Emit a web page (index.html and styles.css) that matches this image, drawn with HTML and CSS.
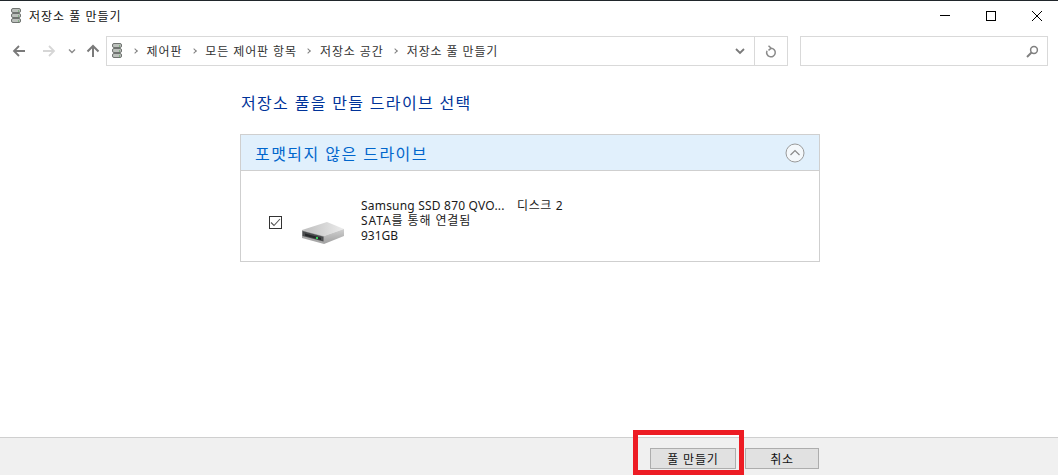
FILE: index.html
```html
<!DOCTYPE html>
<html lang="ko">
<head>
    <meta charset="UTF-8">
    <meta name="viewport" content="width=device-width, initial-scale=1.0">
    <title>저장소 풀 만들기</title>
    <link rel="stylesheet" href="styles.css">
</head>
<body>
    <div class="window">
        <div class="titlebar">
            <svg class="title-icon" width="16" height="18" viewBox="0 0 16 18">
                <g fill="#bcc0bc" stroke="#6f7370">
                    <rect x="3.500" y="1.500" width="9" height="4" rx="1.500"/>
                    <rect x="3.500" y="6.500" width="9" height="4" rx="1.500"/>
                    <rect x="3.500" y="11.500" width="9" height="4" rx="1.500"/>
                </g>
                <path d="M10 4h1M10 9h1M10 14h1" stroke="#4fa04f"/>
            </svg>
            <span class="title-text">저장소 풀 만들기</span>
            <div class="window-buttons">
                <svg width="12" height="12" viewBox="0 0 12 12"><path d="M1 5.500h10" stroke="#000"/></svg>
                <svg width="12" height="12" viewBox="0 0 12 12"><rect x="1.500" y="1.500" width="9" height="9" fill="none" stroke="#000"/></svg>
                <svg width="12" height="12" viewBox="0 0 12 12"><path d="M1 1l10 10M11 1L1 11" stroke="#000"/></svg>
            </div>
        </div>

        <div class="navbar">
            <div class="nav-buttons">
                <svg class="nav-back" width="14" height="14" viewBox="0 0 14 14"><path d="M13 7H2M7 2L2 7l5 5" fill="none" stroke="#7a7a7a" stroke-width="1.800"/></svg>
                <svg class="nav-forward" width="14" height="14" viewBox="0 0 14 14"><path d="M1 7h11M7 2l5 5-5 5" fill="none" stroke="#d6d6d6" stroke-width="1.800"/></svg>
                <svg class="nav-recent" width="8" height="8" viewBox="0 0 8 8"><path d="M1 2.500l3 3 3-3" fill="none" stroke="#8a8a8a" stroke-width="1.400"/></svg>
                <svg width="14" height="14" viewBox="0 0 14 14"><path d="M7 13V2M1.500 7.500L7 2l5.500 5.500" fill="none" stroke="#7a7a7a" stroke-width="2"/></svg>
            </div>
            <div class="address">
                <svg class="address-icon" width="16" height="18" viewBox="0 0 16 18">
                    <g fill="#bcc0bc" stroke="#6f7370">
                        <rect x="3.500" y="1.500" width="9" height="4" rx="1.500"/>
                        <rect x="3.500" y="6.500" width="9" height="4" rx="1.500"/>
                        <rect x="3.500" y="11.500" width="9" height="4" rx="1.500"/>
                    </g>
                    <path d="M10 4h1M10 9h1M10 14h1" stroke="#4fa04f"/>
                </svg>
                <div class="crumbs">
                    <span class="sep"></span><span>제어판</span>
                    <span class="sep"></span><span>모든 제어판 항목</span>
                    <span class="sep"></span><span>저장소 공간</span>
                    <span class="sep"></span><span>저장소 풀 만들기</span>
                </div>
                <svg class="address-drop" width="10" height="8" viewBox="0 0 10 8"><path d="M1 2l4 4 4-4" fill="none" stroke="#7a7a7a" stroke-width="1.800"/></svg>
                <div class="refresh">
                    <svg width="12" height="13" viewBox="0 0 12 13"><path d="M6 3.200A4.300 4.300 0 1 1 2 5.800M3.500 0.800L6.200 3.200 3.500 5.400" fill="none" stroke="#8a8a8a" stroke-width="1.500"/></svg>
                </div>
            </div>
            <div class="search">
                <svg width="13" height="13" viewBox="0 0 13 13"><circle cx="8" cy="5" r="3.400" fill="none" stroke="#808080" stroke-width="1.500"/><path d="M5.500 7.500L1 12" stroke="#808080" stroke-width="2"/></svg>
            </div>
        </div>

        <div class="content">
            <h1>저장소 풀을 만들 드라이브 선택</h1>
            <div class="group">
                <div class="group-header">
                    <span>포맷되지 않은 드라이브</span>
                    <svg width="20" height="20" viewBox="0 0 20 20"><circle cx="10" cy="10" r="9" fill="#f4f8fb" stroke="#9a9a9a"/><path d="M5.500 12L10 7.500l4.500 4.500" fill="none" stroke="#8a8a8a" stroke-width="1.200"/></svg>
                </div>
                <div class="drive">
                    <span class="checkbox">
                        <svg width="11" height="11" viewBox="0 0 11 11"><path d="M1 5.500l3 3 6-6.500" fill="none" stroke="#555" stroke-width="1.100"/></svg>
                    </span>
                    <svg class="drive-icon" width="43" height="22" viewBox="0 0 43 22">
                        <defs>
                            <linearGradient id="driveTop" x1="0" y1="0" x2="1" y2="0">
                                <stop offset="0" stop-color="#bdbdbd"/>
                                <stop offset="1" stop-color="#ececec"/>
                            </linearGradient>
                            <linearGradient id="driveSide" x1="0" y1="0" x2="0" y2="1">
                                <stop offset="0" stop-color="#d0d0d0"/>
                                <stop offset="1" stop-color="#a0a0a0"/>
                            </linearGradient>
                        </defs>
                        <path d="M0 8L25 0l17 7-20 7z" fill="url(#driveTop)"/>
                        <path d="M22 14l20-7v7l-20 8z" fill="url(#driveSide)"/>
                        <path d="M0 8l22 6v8L0 16z" fill="#a8a8a8"/>
                        <path d="M0.500 9l21 5.700v4.800L0.500 14z" fill="#4a4c4e"/>
                        <path d="M3 11.500l16 4.300v2.200L3 13.800z" fill="#26282a"/>
                        <rect x="14" y="15" width="2" height="2" fill="#35d05a"/>
                    </svg>
                    <div class="drive-info">
                        <div class="drive-name"><span class="drive-model">Samsung SSD 870 QVO...</span><span class="drive-disk">디스크 2</span></div>
                        <div class="drive-bus">SATA를 통해 연결됨</div>
                        <div>931GB</div>
                    </div>
                </div>
            </div>
        </div>

        <div class="footer">
            <button type="button" class="btn-create">풀 만들기</button>
            <button type="button" class="btn-cancel">취소</button>
            <div class="highlight"></div>
        </div>
    </div>
</body>
</html>
```

FILE: styles.css
```css
html, body {
    margin: 0;
    padding: 0;
    height: 100%;
    overflow: hidden;
}
body {
    font-family: "Noto Sans", "Noto Sans CJK KR", sans-serif;
    font-size: 12px;
    color: #1a1a1a;
    background-color: #fff;
}
.window {
    height: 475px;
    box-sizing: border-box;
    border-top: 1px solid #20262b;
    display: flex;
    flex-direction: column;
}
.titlebar {
    height: 30px;
    display: flex;
    align-items: center;
    padding-left: 8px;
}
.title-icon {
    margin-right: 5px;
}
.title-text {
    color: #111;
    letter-spacing: 1px;
}
.window-buttons {
    margin-left: auto;
    display: flex;
    align-items: center;
    gap: 34px;
    padding-right: 15px;
}
.navbar {
    height: 30px;
    margin-top: 5px;
    display: flex;
    align-items: stretch;
    padding-right: 10px;
}
.nav-buttons {
    width: 106px;
    flex: none;
    display: flex;
    align-items: center;
    padding-left: 12px;
    box-sizing: border-box;
}
.nav-back {
    margin-right: 16px;
}
.nav-forward {
    margin-right: 12px;
}
.nav-recent {
    margin-right: 10px;
}
.address {
    width: 682px;
    flex: none;
    box-sizing: border-box;
    border: 1px solid #d9d9d9;
    display: flex;
    align-items: center;
    padding-left: 2px;
}
.crumbs {
    display: flex;
    align-items: center;
    gap: 9.500px;
    margin-left: 8px;
    flex: 1;
    color: #333;
    letter-spacing: 0.900px;
}
.sep {
    width: 4px;
    height: 4px;
    box-sizing: border-box;
    border-top: 1.500px solid #808080;
    border-right: 1.500px solid #808080;
    transform: rotate(45deg);
}
.address-drop {
    margin-right: 9px;
}
.refresh {
    width: 32px;
    align-self: stretch;
    border-left: 1px solid #d9d9d9;
    display: flex;
    align-items: center;
    justify-content: center;
}
.search {
    width: 248px;
    flex: none;
    margin-left: 12px;
    box-sizing: border-box;
    border: 1px solid #d9d9d9;
    display: flex;
    align-items: center;
    justify-content: flex-end;
    padding-right: 8px;
}
.content {
    flex: 1;
    padding-left: 240px;
}
h1 {
    margin: 26px 0 20px 1px;
    font-size: 16px;
    line-height: 22px;
    font-weight: 400;
    letter-spacing: 1.330px;
    color: #003399;
}
.group {
    width: 580px;
    box-sizing: border-box;
    border: 1px solid #cfcfcf;
}
.group-header {
    height: 35px;
    background-color: #e1f0fc;
    border-bottom: 1px solid #cfcfcf;
    display: flex;
    align-items: center;
    justify-content: space-between;
    padding: 0 14px;
    font-size: 16px;
    letter-spacing: 1.450px;
    color: #0066cc;
}
.drive {
    height: 90px;
    display: flex;
    align-items: center;
    padding-left: 28px;
}
.checkbox {
    width: 11px;
    height: 11px;
    border: 1px solid #333;
    display: flex;
    margin-top: 12px;
}
.drive-icon {
    margin: 33px 0 0 20px;
}
.drive-info {
    margin-left: 16px;
    margin-top: 9px;
    line-height: 15px;
    color: #1a1a1a;
}
.drive-name {
    display: flex;
}
.drive-model {
    width: 156px;
    letter-spacing: 0.200px;
}
.drive-disk {
    letter-spacing: 0.600px;
}
.drive-bus {
    letter-spacing: 0.900px;
}
.footer {
    height: 38px;
    box-sizing: border-box;
    border-top: 1px solid #cfcfcf;
    background-color: #f0f0f0;
    display: flex;
    justify-content: flex-end;
    align-items: flex-start;
    gap: 9px;
    padding: 10px 239px 0 0;
    position: relative;
}
.footer button {
    height: 21px;
    padding: 0;
    border: 1px solid #adadad;
    background-color: #e1e1e1;
    font-family: inherit;
    font-size: 12px;
    letter-spacing: 0.800px;
    color: #111;
}
.btn-create {
    width: 86px;
}
.btn-cancel {
    width: 74px;
}
.highlight {
    position: absolute;
    left: 633px;
    top: -8px;
    width: 111px;
    height: 45px;
    box-sizing: border-box;
    border: 5px solid #ed1c24;
}
```
